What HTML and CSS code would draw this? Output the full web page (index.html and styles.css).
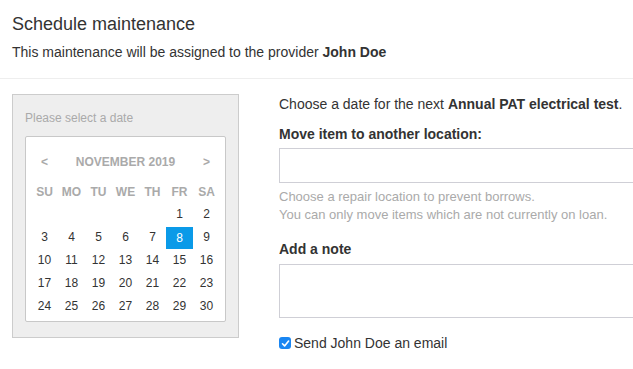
FILE: index.html
```html
<!DOCTYPE html>
<html>
<head>
<meta charset="utf-8">
<link rel="stylesheet" href="styles.css">
</head>
<body>
<div class="modal">
  <header class="modal-header">
    <h1 class="title">Schedule maintenance</h1>
    <p class="subtitle">This maintenance will be assigned to the provider <strong>John Doe</strong></p>
  </header>
  <div class="modal-body">
    <div class="date-col">
      <div class="date-panel">
        <div class="date-label">Please select a date</div>
        <div class="calendar">
          <div class="cal-grid cal-nav">
            <span class="nav">&lt;</span>
            <span class="month">NOVEMBER 2019</span>
            <span class="nav">&gt;</span>
          </div>
          <div class="cal-grid cal-dow">
            <span>SU</span><span>MO</span><span>TU</span><span>WE</span><span>TH</span><span>FR</span><span>SA</span>
          </div>
          <div class="cal-grid cal-days">
            <span></span><span></span><span></span><span></span><span></span><span>1</span><span>2</span>
            <span>3</span><span>4</span><span>5</span><span>6</span><span>7</span><span class="sel">8</span><span>9</span>
            <span>10</span><span>11</span><span>12</span><span>13</span><span>14</span><span>15</span><span>16</span>
            <span>17</span><span>18</span><span>19</span><span>20</span><span>21</span><span>22</span><span>23</span>
            <span>24</span><span>25</span><span>26</span><span>27</span><span>28</span><span>29</span><span>30</span>
          </div>
        </div>
      </div>
    </div>
    <div class="form-col">
      <p class="intro">Choose a date for the next <strong>Annual PAT electrical test</strong>.</p>
      <label class="field-label">Move item to another location:</label>
      <input class="text-input" type="text">
      <p class="help">Choose a repair location to prevent borrows.<br>You can only move items which are not currently on loan.</p>
      <label class="field-label note-label">Add a note</label>
      <textarea class="note"></textarea>
      <label class="check">
        <span class="box"><svg width="9" height="9" viewBox="0 0 9 9"><path d="M1.5 4.8 L3.6 6.9 L7.6 2" fill="none" stroke="#fff" stroke-width="1.6" stroke-linecap="round" stroke-linejoin="round"/></svg></span>
        <span>Send John Doe an email</span>
      </label>
    </div>
  </div>
</div>
</body>
</html>
```

FILE: styles.css
```css
* { box-sizing: border-box; }
html, body {
  margin: 0;
  padding: 0;
  background: #fff;
  font-family: "Liberation Sans", Arial, Helvetica, sans-serif;
  color: #333;
  overflow: hidden;
}
.modal {
  width: 633px;
  height: 369px;
  overflow: hidden;
}
.modal-header {
  padding: 13px 12px 0 12px;
  height: 79px;
  border-bottom: 1px solid #eee;
}
.title {
  margin: 0;
  font-size: 18px;
  font-weight: normal;
  line-height: 22px;
  color: #333;
}
.subtitle {
  margin: 8px 0 0 0;
  font-size: 14px;
  line-height: 18px;
}
.subtitle strong { font-weight: bold; }
.modal-body {
  display: flex;
  padding: 15px 0 0 12px;
  gap: 40px;
}
.date-col { width: 227px; flex: none; }
.date-panel {
  background: #eeeeee;
  border: 1px solid #cccccc;
  padding: 16px 12px 15px 12px;
  height: 244px;
}
.date-label {
  font-size: 12px;
  line-height: 14px;
  color: #aaa;
}
.calendar {
  margin-top: 11px;
  background: #fff;
  border: 1px solid #c8c8c8;
  border-radius: 2px;
  padding: 14px 5px 5px 5px;
  height: 186px;
}
.cal-grid {
  display: grid;
  grid-template-columns: repeat(7, 27px);
  justify-content: center;
  font-size: 12px;
  text-align: center;
}
.cal-nav {
  height: 23px;
  line-height: 23px;
  font-weight: bold;
  color: #aaa;
}
.cal-nav .month { grid-column: 2 / span 5; }
.cal-dow {
  margin-top: 8px;
  height: 21px;
  line-height: 21px;
  font-weight: bold;
  color: #aaa;
}
.cal-days span {
  display: block;
  height: 23px;
  line-height: 23px;
  color: #333;
}
.cal-days span.sel {
  background: #0a9ae8;
  color: #fff;
  height: 22px;
  line-height: 22px;
  margin-top: 1px;
}
.form-col {
  flex: 1;
  padding-top: 2px;
  min-width: 0;
  overflow: hidden;
}
.intro {
  margin: 0;
  font-size: 14px;
  line-height: 16px;
}
.field-label {
  display: block;
  font-size: 14px;
  font-weight: bold;
  line-height: 16px;
  margin-top: 14px;
}
.text-input {
  display: block;
  width: calc(100% + 4px);
  height: 35px;
  margin: 6px 0 0 0;
  border: 1px solid #cfcfd6;
  border-radius: 0;
  background: #fff;
  outline: none;
}
.help {
  margin: 5px 0 0 0;
  font-size: 13px;
  line-height: 18px;
  color: #aaa;
}
.note-label { margin-top: 17px; }
.note {
  display: block;
  width: calc(100% + 4px);
  height: 54px;
  margin: 7px 0 0 0;
  border: 1px solid #cfcfd6;
  resize: none;
  background: #fff;
  outline: none;
}
.check {
  display: flex;
  align-items: center;
  gap: 3px;
  margin-top: 17px;
  font-size: 14px;
  line-height: 16px;
  color: #333;
}
.box {
  width: 12px;
  height: 12px;
  border-radius: 3px;
  background: #1a86f2;
  display: flex;
  align-items: center;
  justify-content: center;
}
.box svg { display: block; }
```
